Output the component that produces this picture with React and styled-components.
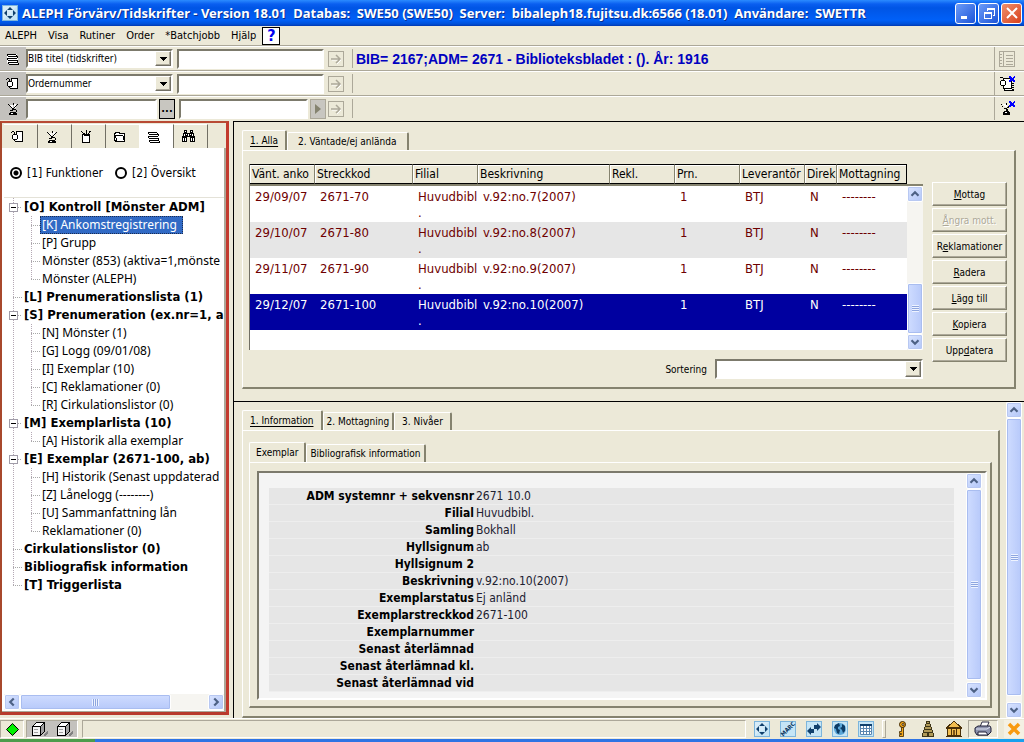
import React, {useState} from "react"
import styled, {createGlobalStyle, css} from "styled-components"

const GlobalStyle = createGlobalStyle`
	* {
		box-sizing: border-box;
	}
	body {
		margin: 0;
		background: #ece9d8;
		font-family: "DejaVu Sans Condensed", "DejaVu Sans", sans-serif;
		font-size: 12px;
		color: #000000;
	}
	button, select, input {
		font-family: inherit;
		color: inherit;
		margin: 0;
		padding: 0;
		border-radius: 0;
		outline: none;
	}
	svg {
		display: block;
		flex: none;
	}
`

/* ---------- icons ---------- */

const Pixel = ({size = 16, children}) => (
	<svg width={size} height={size} viewBox="0 0 16 16" shapeRendering="crispEdges" aria-hidden="true">
		{children}
	</svg>
)

const StackIcon = () => (
	<Pixel>
		<path d="M2 3h10v2h1v9H4v-2H2z" fill="#fff" />
		<path d="M2 3h9v1H2z M3 5h10v1H3z M2 7h10v1H2z M3 9h10v1H3z M3 11h10v1H3z M4 13h10v1H4z M2 4h1v1H2z M11 4h1v1h-1z M12 6h1v1h-1z M2 8h1v1H2z M12 10h1v1h-1z M3 12h1v1H3z M13 12h1v1h-1z" fill="#000" />
	</Pixel>
)

const OrderIcon = () => (
	<Pixel>
		<path d="M6 2h7v11H6z" fill="#fff" />
		<path d="M6 2h7v1H6z M12 3h1v9h-1z M5 12h8v1H5z M6 3h1v2H6z" fill="#000" />
		<path d="M3 5h4v1h1v4H7v1H3v-1H2V6h1z" fill="#000" />
		<path d="M3 6h4v4H3z" fill="#fff" />
		<path d="M1 3h1v1H1z M2 2h2v1H2z M4 3h1v2H4z M4 11h1v1H4z" fill="#000" />
	</Pixel>
)

const LampIcon = () => (
	<Pixel>
		<path d="M4 4h4v3H6z M9 3h2v4H9z" fill="#fff" />
		<path d="M3 3h1v1H3z M4 4h1v1H4z M5 5h1v1H5z M6 6h1v1H6z M8 2h1v2H8z M12 3h1v1h-1z M11 4h1v1h-1z M10 5h1v1h-1z M9 6h1v1H9z M7 7h2v2H7z M5 9h3v1H5z M9 8h2v1H9z M11 9h1v2h-1z M4 12h8v2H4z M5 11h6v1H5z" fill="#000" />
		<path d="M6 12h2v1H6z" fill="#fff" />
	</Pixel>
)

const BinIcon = () => (
	<Pixel>
		<path d="M4.500 5.500H11.500V13.500H4.500z" fill="#fff" stroke="#000" />
		<path d="M3 2h1v1h1v1H4V3H3z M5 4h2v2H5z M8 1h1v5H8z M11 2h2v1h-1v1h-1v1h-1V4h1z M6 5h5v2H6z" fill="#000" />
	</Pixel>
)

const FolderIcon = () => (
	<Pixel>
		<path d="M2.500 11.500V4.500H3.500V3.500H7.500V4.500H12.500V12.500H4.500z" fill="#fff" stroke="#000" />
		<path d="M2 6h9v1H2z M3 7h1v2H3z M4 9h1v3H4z M11 7h1v4h-1z" fill="#000" />
	</Pixel>
)

const BinocularsIcon = () => (
	<Pixel>
		<path d="M4 1h3v3h3V1h3v3h1v3h1v6h-5V8H7v5H2V7h1V4h1z" fill="#000" />
		<path d="M5 2h1v1H5z M11 2h1v1h-1z M4 5h1v2H4z M6 5h1v1H6z M10 5h1v1h-1z M12 5h1v2h-1z M8 5h1v2H8z M3 9h1v3H3z M5 9h1v3H5z M11 9h1v3h-1z M13 9h1v3h-1z" fill="#fff" />
	</Pixel>
)

const ListIcon = () => (
	<Pixel>
		<path d="M.5.5H15.500V15.500H.5z M4.500 1V15 M7 4.500H14 M7 7.500H14 M7 10.500H14 M7 13.500H14 M1 3.500H3 M1 6.500H3 M1 9.500H3 M1 12.500H3" fill="none" stroke="#aca899" />
	</Pixel>
)

const BlueCross = () => (
	<path d="M10 0h2v1h1v1h1V1h1V0h1v2h-1v2h1v2h-2V5h-2v1h-2V4h1V2h-1z" fill="#0000ff" />
)

const OrderCrossIcon = () => (
	<Pixel>
		<path d="M4.500 2.500H12.500V12.500H4.500z" fill="#fff" stroke="#000" />
		<path d="M2 4h4v1h1v4H6v1H2V9H1V5h1z M5 13h10v2H5z M1 1h3v1H1z M12 7h3v1h-2v1h2v1h-2v1h2v1h-3z" fill="#000" />
		<path d="M2 5h4v4H2z M6 13h7v1H6z" fill="#fff" />
		<BlueCross />
	</Pixel>
)

const LampCrossIcon = () => (
	<Pixel>
		<path d="M4 3h4v3H6z" fill="#fff" />
		<path d="M2 3h1v1H2z M3 5h1v1H3z M7 2h1v2H7z M9 5h2v1H9z M8 6h2v1H8z M5 7h3v1H5z M7 8h2v2H7z M4 11h7v3H4z M5 10h5v1H5z" fill="#000" />
		<path d="M6 11h2v1H6z" fill="#fff" />
		<BlueCross />
	</Pixel>
)

const GoIcon = ({size = 16}) => (
	<svg width={size} height={size} viewBox="0 0 14 14" aria-hidden="true">
		<path d="M3 8H12 M8 4L12 8L8 12" fill="none" stroke="#fff" />
		<path d="M2 7H11 M7 3L11 7L7 11" fill="none" stroke="#aca899" strokeWidth="1.500" />
	</svg>
)

const Chevron = ({dir}) => {
	const paths = {
		up: "M4 10L8 6L12 10",
		down: "M4 6L8 10L12 6",
		left: "M10 4L6 8L10 12",
		right: "M6 4L10 8L6 12",
	}
	return (
		<svg width="14" height="14" viewBox="0 0 16 16" aria-hidden="true">
			<path d={paths[dir]} fill="none" stroke="#4d6185" strokeWidth="2.500" />
		</svg>
	)
}

const DropArrow = () => (
	<svg width="7" height="4" viewBox="0 0 7 4" shapeRendering="crispEdges" aria-hidden="true">
		<path d="M0 0h7v1H6v1H5v1H4v1H3V3H2V2H1V1H0z" />
	</svg>
)

const AlephIcon = () => (
	<svg width="16" height="16" viewBox="0 0 16 16" aria-hidden="true">
		<rect x=".5" y=".5" width="15" height="15" fill="#c5e5f6" stroke="#7cb5dc" />
		<path d="M1 15L15 1H1z" fill="#d6ecf8" />
		<path d="M8 2l3 3H5z M8 14l3-3H5z M2 8l3-3v6z M14 8l-3-3v6z" fill="#10406c" />
		<circle cx="8" cy="8" r="2" fill="#d8eefa" />
	</svg>
)

const ToolIcon = ({kind}) => (
	<svg width="16" height="16" viewBox="0 0 16 16" aria-hidden="true">
		<rect x=".5" y=".5" width="15" height="15" fill="#c5e5f6" stroke="#7cb5dc" />
		{kind === "marc" && (
			<text x="8" y="10" fontSize="6" fontWeight="700" textAnchor="middle" transform="rotate(-45 8 8)" fill="#0c355e">MARC</text>
		)}
		{kind === "swap" && <path d="M1 10l4-4v2h3v4H5v2z M15 6l-4-4v2H8v4h3v2z" fill="#10406c" />}
		{kind === "globe" && (
			<>
				<circle cx="8" cy="8" r="6" fill="#5aa6d8" />
				<path d="M3 4l4-2 1 3-2 1v2l2 1-1 4-2-1-1-4-2-1z M10 3l3 2v5l-2 2-1-3-2-2 2-1z" fill="#0c3c66" />
			</>
		)}
		{kind === "grid" && (
			<>
				<path d="M2 3h12v11H2z" fill="#fff" />
				<path d="M2 3h12v2H2z" fill="#10406c" />
				<path d="M2.500 5V13.500H13.500V5 M5.500 5V14 M8.500 5V14 M11.500 5V14 M2 7.500H14 M2 10.500H14" stroke="#5a86b0" fill="none" />
			</>
		)}
	</svg>
)

const CubeIcon = () => (
	<svg width="18" height="16" viewBox="0 0 18 16" shapeRendering="crispEdges" aria-hidden="true">
		<path d="M12 14l5-5v3l-3 3z" fill="#808080" />
		<path d="M1.500 5.500L5.500 1.500H13.500L9.500 5.500z" fill="#fff" stroke="#000" />
		<path d="M9.500 5.500L13.500 1.500V10.500L9.500 14.500z" fill="#a0a0a0" stroke="#000" />
		<path d="M1.500 5.500H9.500V14.500H1.500z" fill="#f4f4f4" stroke="#000" />
		<path d="M3 8h4v1H3z M3 11h4v1H3z" fill="#a0a0a0" />
	</svg>
)

const KeyIcon = () => (
	<svg width="16" height="16" viewBox="0 0 16 16" aria-hidden="true">
		<circle cx="8.500" cy="3.500" r="3" fill="#f5a818" stroke="#3a2400" />
		<circle cx="9" cy="3.500" r="1" fill="#fff" stroke="#3a2400" />
		<path d="M7.500 6.500h2v9h-4v-2h2v-1h-2v-2h2z" fill="#f5a818" stroke="#3a2400" strokeWidth=".8" />
	</svg>
)

const TowerIcon = () => (
	<Pixel>
		<path d="M6 0h4v3h1v3h1v3h1v3h1v4H2v-4h1V9h1V6h1V3h1z" fill="#3c3418" />
		<path d="M7 1h2v1H7z M6 3h4v2H6z M5 6h6v2H5z M4 9h8v2H4z M3 12h4v3H3z M9 12h4v3H9z" fill="#b09a58" />
	</Pixel>
)

const TempleIcon = () => (
	<Pixel>
		<path d="M8 0l8 6v2h-1v7h1v1H0v-1h1V8H0V6z" fill="#4a3008" />
		<path d="M8 1l6 5H2z M2 8h3v6H2z M6 8h4v6H6z M11 8h3v6h-3z" fill="#f2be50" />
		<path d="M7 9h2v5H7z" fill="#7a5418" />
	</Pixel>
)

const PrinterIcon = () => (
	<svg width="18" height="16" viewBox="0 0 18 16" aria-hidden="true">
		<path d="M6 6l2-5h7l-2 5z" fill="#fff" stroke="#303048" />
		<path d="M1 7l3-2h12l1 2v4l-3 3H3l-2-3z" fill="#8c92ac" stroke="#202038" />
		<path d="M2 8h11l3-2" stroke="#e0e4f4" fill="none" />
		<path d="M4 11h8l2 3H4z" fill="#fff" stroke="#202038" />
	</svg>
)

/* ---------- shared parts ---------- */

const sunken = css`
	border: 2px solid;
	border-color: #7c7a6c #ffffff #ffffff #7c7a6c;
`

const raised = css`
	border: 1px solid;
	border-color: #ffffff #716f64 #716f64 #ffffff;
	box-shadow: inset -1px -1px 0 #aca899;
	background: #ece9d8;
`

const SelectWrap = styled.div`
	${sunken}
	display: grid;
	grid-template-columns: 1fr 16px;
	width: ${p => p.$width}px;
	height: ${p => p.$height || 19}px;
	background: #ffffff;
	select {
		grid-area: 1 / 1 / 2 / 3;
		appearance: none;
		border: none;
		background: transparent;
		font-size: 10px;
	}
`

const SelectArrow = styled.span`
	${raised}
	grid-area: 1 / 2;
	display: flex;
	align-items: center;
	justify-content: center;
	pointer-events: none;
`

const Select = ({id, label, options, ...rest}) => (
	<SelectWrap {...rest}>
		<select id={id} aria-label={label}>
			{options.map(o => <option key={o}>{o}</option>)}
		</select>
		<SelectArrow><DropArrow /></SelectArrow>
	</SelectWrap>
)

const TextInput = styled.input`
	${sunken}
	width: ${p => p.$width}px;
	height: 20px;
	background: #ffffff;
	font-size: 10px;
`

const Bar = styled.div`
	display: flex;
	flex-direction: ${p => (p.$horizontal ? "row" : "column")};
	align-self: stretch;
	flex: none;
	${p => (p.$horizontal ? "height: 16px;" : "width: 16px;")}
	background: #f6f5f1;
`

const BarButton = styled.button`
	display: flex;
	align-items: center;
	justify-content: center;
	flex: none;
	width: 16px;
	height: 16px;
	border: 1px solid #ffffff;
	border-radius: 2px;
	background: linear-gradient(135deg, #dbe5ff, #b2c6f8);
	box-shadow: inset 0 0 0 1px #b8c8f2;
`

const BarTrack = styled.div`
	display: flex;
	flex-direction: inherit;
	flex: 1;
`

const BarThumb = styled.div`
	display: flex;
	align-items: center;
	justify-content: center;
	flex: ${p => p.$size};
	border: 1px solid #ffffff;
	border-radius: 2px;
	box-shadow: inset 0 0 0 1px #a9bdf0;
	background: linear-gradient(${p => (p.$horizontal ? "180deg" : "90deg")}, #cfdcff, #b7c9fa);
	&::after {
		content: "";
		width: 7px;
		height: 7px;
		background: repeating-linear-gradient(${p => (p.$horizontal ? "90deg" : "180deg")}, #eef3ff 0 1px, #8ea6e0 1px 2px);
	}
`

const BarSpace = styled.div`
	flex: ${p => p.$size};
`

const ScrollBar = ({horizontal, before = 0, size = 1, after = 0}) => (
	<Bar $horizontal={horizontal}>
		<BarButton aria-label="Bakåt"><Chevron dir={horizontal ? "left" : "up"} /></BarButton>
		<BarTrack>
			<BarSpace $size={before} />
			<BarThumb $size={size} $horizontal={horizontal} />
			<BarSpace $size={after} />
		</BarTrack>
		<BarButton aria-label="Framåt"><Chevron dir={horizontal ? "right" : "down"} /></BarButton>
	</Bar>
)

const Tabs = styled.div`
	display: flex;
	align-items: flex-end;
	height: 20px;
`

const Tab = styled.button`
	height: ${p => (p.$active ? 20 : 18)}px;
	padding: 0 ${p => p.$pad || 6}px;
	border: solid;
	border-width: 1px 2px 0 1px;
	border-color: #ffffff #85836f #ffffff #ffffff;
	border-radius: 2px 2px 0 0;
	background: #ece9d8;
	font-size: 10px;
	line-height: 16px;
	white-space: nowrap;
	text-decoration: ${p => (p.$underline ? "underline" : "none")};
	text-underline-offset: 2px;
`

const TabPanel = styled.div`
	border: solid;
	border-width: 1px 2px 2px 1px;
	border-color: #ffffff #85836f #85836f #ffffff;
	display: flex;
	flex: 1;
	min-height: 0;
	padding: ${p => p.$padding};
`

/* ---------- title and menu ---------- */

const Window = styled.div`
	display: flex;
	flex-direction: column;
	min-height: 100vh;
`

const TitleBar = styled.header`
	display: flex;
	align-items: center;
	gap: 4px;
	height: 26px;
	padding: 0 2px;
	background: linear-gradient(#2b8bff 0, #0a5ff0 4px, #0055e5 8px, #0060f8 20px, #0050d8 24px, #0138b0 26px);
`

const TitleText = styled.h1`
	flex: 1;
	margin: 0;
	color: #ffffff;
	font-family: "Noto Sans", sans-serif;
	font-size: 13px;
	line-height: 16px;
	text-shadow: 1px 1px 0 #0a2f90;
	white-space: pre;
`

const TitleButton = styled.button`
	display: flex;
	align-items: center;
	justify-content: center;
	width: 21px;
	height: 21px;
	margin-left: -2px;
	border: 1px solid #ffffff;
	border-radius: 3px;
	background: ${p => (p.$close ? "linear-gradient(135deg, #f0906c, #d8401c)" : "linear-gradient(135deg, #6c9cf8, #1c54d8)")};
`

const MenuBar = styled.nav`
	display: flex;
	align-items: center;
	gap: 11px;
	height: 20px;
	padding: 0 5px;
	border-bottom: 1px solid #aca899;
	button {
		border: none;
		background: none;
		font-size: 11px;
		line-height: 16px;
	}
	.help {
		width: 18px;
		height: 18px;
		margin-left: -5px;
		border: 1px solid #000000;
		background: #ffffff;
		color: #0000f0;
		font-size: 16px;
		font-weight: 700;
	}
`

/* ---------- toolbars ---------- */

const ToolRow = styled.div`
	display: flex;
	align-items: center;
	height: 25px;
	border-top: 1px solid #ffffff;
	border-bottom: 1px solid ${p => (p.$last ? "#ece9d8" : "#aca899")};
`

const ToolHandle = styled.span`
	display: flex;
	align-items: center;
	justify-content: center;
	align-self: stretch;
	width: 26px;
	background: #c3c1bd;
`

const ToolFields = styled.div`
	display: flex;
	align-items: center;
	gap: 4px;
	width: 302px;
`

const Pair = styled.div`
	display: flex;
	gap: 2px;
	width: ${p => p.$width}px;
	input {
		flex: 1;
		min-width: 0;
	}
`

const SmallButton = styled.button`
	display: flex;
	align-items: center;
	justify-content: center;
	width: 16px;
	height: 20px;
	border: 1px solid ${p => (p.$dark ? "#000000" : "#aca899")};
	background: #c8c6c0;
	font-size: 11px;
	font-weight: 700;
	line-height: 12px;
`

const GoButton = styled.button`
	display: flex;
	align-items: center;
	justify-content: center;
	width: 16px;
	height: 16px;
	border: 1px solid #aca899;
	background: #ece9d8;
`

const RecordTitle = styled.div`
	display: flex;
	align-items: center;
	flex: 1;
	height: 19px;
	margin-left: 8px;
	padding-left: 3px;
	border-left: 1px solid #aca899;
	color: #0000c0;
	font-family: "Liberation Sans", Arial, sans-serif;
	font-size: 14px;
	font-weight: 700;
`

const ToolEnd = styled.div`
	display: flex;
	align-items: center;
	align-self: stretch;
	width: 30px;
	padding-left: 4px;
	border-left: 1px solid #aca899;
	button {
		border: none;
		background: none;
	}
`

/* ---------- left pane ---------- */

const Main = styled.main`
	display: grid;
	grid-template-columns: 229px minmax(0, 1fr);
	gap: 4px;
	flex: 1;
`

const SidePane = styled.aside`
	display: flex;
	flex-direction: column;
	min-width: 0;
	margin-bottom: 3px;
	border: solid;
	border-width: 2px 3px 3px 2px;
	border-color: #b84a34 #c23a2e #b83a2c #a8482c;
	background: #ffffff;
`

const SideTabs = styled.div`
	display: flex;
	height: 25px;
	background: #ece9d8;
	padding: 1px 0 0 2px;
`

const SideTab = styled.button`
	display: flex;
	align-items: center;
	padding-left: 6px;
	width: ${p => p.$width || 34}px;
	border: solid;
	border-width: 1px 1px 0 0;
	border-color: #ffffff ${p => (p.$flush ? "#ffffff" : "#716f64")};
	background: ${p => (p.$active ? "#ffffff" : "#ece9d8")};
`

const SideBody = styled.div`
	display: flex;
	flex-direction: column;
	flex: 1;
	min-width: 0;
	border-right: 2px solid #aca899;
	border-bottom: 1px solid #aca899;
	padding: 0 0 1px 2px;
`

const Modes = styled.div`
	display: flex;
	align-items: center;
	gap: 12px;
	height: 50px;
	padding-left: 6px;
	border-bottom: 1px solid #e4e2d8;
	label {
		display: flex;
		align-items: center;
		gap: 5px;
		white-space: nowrap;
	}
	input {
		appearance: none;
		width: 12px;
		height: 12px;
		border: 2px solid #000000;
		border-radius: 50%;
		background: #ffffff;
	}
	input:checked {
		background: radial-gradient(circle, #000000 0 2px, #ffffff 3px);
	}
`

const Tree = styled.ul`
	flex: 1;
	margin: 0;
	padding: 0 0 0 5px;
	list-style: none;
	overflow: hidden;
	ul {
		margin: 0 0 0 18px;
		padding: 0;
		list-style: none;
	}
`

/* dotted guide lines hang from the marker cell of every item */
const Item = styled.li`
	display: grid;
	grid-template-columns: 13px minmax(0, 1fr);
	background: repeating-linear-gradient(#b4a8b4 0 1px, transparent 1px 2px) no-repeat 4px 0 / 1px ${p => (p.$last ? "9px" : "100%")};
`

const Marker = styled.span`
	display: flex;
	align-items: center;
	height: 18px;
	padding-left: ${p => (p.$plain ? 4 : 0)}px;
	&::after {
		content: "";
		flex: 1;
		height: 1px;
		background: repeating-linear-gradient(90deg, #a8a8a8 0 1px, transparent 1px 2px);
	}
`

const Toggle = styled.button`
	display: flex;
	align-items: center;
	justify-content: center;
	width: 9px;
	height: 9px;
	border: 1px solid #a09ca8;
	background: #ffffff;
	&::after {
		content: "";
		width: 5px;
		height: 1px;
		background: #000000;
	}
`

const Label = styled.span`
	justify-self: start;
	height: 18px;
	padding: 0 2px;
	line-height: 18px;
	white-space: nowrap;
	${p => (p.$bold
		? "font-size: 13px; font-weight: 700;"
		: "font-size: 12px; font-family: \"Noto Sans\", sans-serif;")}
	${p => p.$selected && css`
		padding: 0 6px 0 2px;
		background: #316ac5;
		color: #ffffff;
		outline: 1px dotted #1b2c50;
		outline-offset: -1px;
	`}
`

const Branch = styled.div`
	grid-column: 1 / 3;
`

/* ---------- right side ---------- */

const WorkArea = styled.div`
	display: flex;
	flex-direction: column;
	min-width: 0;
	border-left: 1px solid #000000;
`

const UpperPane = styled.section`
	display: flex;
	flex-direction: column;
	height: 280px;
	border-top: 1px solid #000000;
	padding: 8px 8px 12px;
`

const ListColumn = styled.div`
	display: flex;
	flex-direction: column;
	flex: 1;
	min-width: 0;
`

const ListFrame = styled.div`
	display: flex;
	height: 187px;
`

const ListMain = styled.div`
	flex: 1;
	min-width: 0;
	border-left: 1px solid #716f64;
	background: linear-gradient(#ece9d8 20px, #ffffff 20px);
`

const ListScroll = styled.div`
	display: flex;
	margin-top: 20px;
	border-top: 2px solid #85836f;
`

const IssueTable = styled.table`
	width: 100%;
	table-layout: fixed;
	border-collapse: separate;
	border-spacing: 0;
	th, td {
		padding: 0;
		white-space: nowrap;
		text-align: left;
		font-weight: 400;
	}
	th {
		height: 20px;
		padding-left: 2px;
		border: solid;
		border-width: 1px 1px 1px 0;
		border-color: #000000 #85836f #000000;
		box-shadow: inset 1px 1px 0 #ffffff;
		font-size: 12px;
		line-height: 17px;
	}
	th:last-child {
		border-right-color: #000000;
	}
	td {
		height: 36px;
		padding: 3px 0 1px 5px;
		font-size: 13px;
		line-height: 16px;
		vertical-align: top;
	}
	tbody tr:first-child td {
		height: 38px;
		border-top: 2px solid #85836f;
	}
`

const IssueRow = styled.tr`
	color: ${p => (p.$selected ? "#ffffff" : "#6e0000")};
	background: ${p => (p.$selected ? "#0000a0" : p.$alt ? "#e6e6e6" : "#ffffff")};
`

const SortLine = styled.div`
	display: flex;
	align-items: center;
	justify-content: flex-end;
	gap: 8px;
	margin-top: 9px;
	font-size: 10px;
`

const Buttons = styled.div`
	display: flex;
	flex-direction: column;
	gap: 2px;
	width: 75px;
	margin: 18px 0 0 9px;
`

const ActionButton = styled.button`
	${raised}
	height: 24px;
	font-size: 10px;
	white-space: nowrap;
	border-right-color: #85836f;
	border-bottom-color: #85836f;
	&:disabled {
		color: #aca899;
		text-shadow: 1px 1px 0 #ffffff;
	}
`

const LowerPane = styled.section`
	display: flex;
	flex: 1;
	padding-right: 2px;
	border-top: 1px solid #000000;
`

const LowerContent = styled.div`
	display: flex;
	flex-direction: column;
	flex: 1;
	min-width: 0;
	padding: 8px 6px 0 8px;
`

const Nested = styled.div`
	display: flex;
	flex-direction: column;
	flex: 1;
	min-width: 0;
`

const Details = styled.div`
	${sunken}
	display: flex;
	flex: 1;
	padding-right: 3px;
	background: #f4f4f4;
`

const DetailBody = styled.div`
	flex: 1;
	padding: 15px 12px 5px 10px;
`

const DetailTable = styled.table`
	width: 100%;
	border-collapse: separate;
	border-spacing: 0;
	th, td {
		height: 17px;
		padding: 0 1px;
		border-bottom: 1px solid #eeeeee;
		background: #e6e6e6;
		font-size: 12px;
		line-height: 16px;
	}
	th {
		width: 206px;
		text-align: right;
		white-space: nowrap;
	}
	td {
		color: #202030;
	}
`

/* ---------- status bar ---------- */

const StatusBar = styled.footer`
	display: flex;
	align-items: center;
	height: 21px;
	border-top: 1px solid #ffffff;
`

const StatusCell = styled.div`
	display: flex;
	align-items: center;
	justify-content: space-around;
	width: ${p => p.$width}px;
	height: 18px;
	margin-right: 2px;
	border: 1px solid;
	border-color: #aca899 #ffffff #ffffff #aca899;
	background: ${p => p.$fill || "transparent"};
`

const StatusText = styled.div`
	flex: 1;
	height: 18px;
	margin: 0 8px 0 2px;
	border: 1px solid;
	border-color: #aca899 #ffffff #ffffff #aca899;
`

const StatusTools = styled.div`
	display: flex;
	align-items: center;
	gap: 10px;
	button {
		border: none;
		background: none;
	}
`

const Divider = styled.span`
	width: 4px;
	height: 18px;
	margin: 0 -2px;
	border: 1px solid;
	border-color: #ffffff #aca899 #aca899 #ffffff;
`

const Pressed = styled.button`
	display: flex;
	align-items: center;
	justify-content: center;
	width: 30px;
	height: 18px;
	margin: 0 6px;
	border: 1px solid;
	border-color: #aca899 #ffffff #ffffff #aca899;
	background: none;
`

const CloseMark = styled.button`
	width: 20px;
	height: 18px;
	padding: 0 2px;
	border: none;
	background: #f4f1e4;
`

const TaskEdge = styled.div`
	display: grid;
	grid-template-columns: 95px 1fr 74px;
	height: 3px;
	span:nth-child(1) { background: #4c9c4c; }
	span:nth-child(2) { background: #2e74e4; }
	span:nth-child(3) { background: #18a0ee; }
`

/* ---------- data ---------- */

const tree = [
	{text: "[O] Kontroll [Mönster ADM]", open: true, items: ["[K] Ankomstregistrering", "[P] Grupp", "Mönster (853) (aktiva=1,mönste", "Mönster (ALEPH)"]},
	{text: "[L] Prenumerationslista (1)"},
	{text: "[S] Prenumeration (ex.nr=1, al", open: true, items: ["[N] Mönster (1)", "[G] Logg (09/01/08)", "[I] Exemplar (10)", "[C] Reklamationer (0)", "[R] Cirkulationslistor (0)"]},
	{text: "[M] Exemplarlista (10)", open: true, items: ["[A] Historik alla exemplar"]},
	{text: "[E] Exemplar (2671-100, ab)", open: true, items: ["[H] Historik (Senast uppdaterad", "[Z] Lånelogg (--------)", "[U] Sammanfattning lån", "Reklamationer (0)"]},
	{text: "Cirkulationslistor (0)"},
	{text: "Bibliografisk information"},
	{text: "[T] Triggerlista"},
]

const columns = [
	["Vänt. anko", 65], ["Streckkod", 98], ["Filial", 65], ["Beskrivning", null], ["Rekl.", 65],
	["Prn.", 65], ["Leverantör", 65], ["Direk", 32], ["Mottagning", 70],
]

const issues = [
	["29/09/07", "2671-70", "v.92:no.7(2007)"],
	["29/10/07", "2671-80", "v.92:no.8(2007)"],
	["29/11/07", "2671-90", "v.92:no.9(2007)"],
	["29/12/07", "2671-100", "v.92:no.10(2007)"],
]

const actions = [
	["", "M", "ottag"], ["", "Å", "ngra mott.", true], ["R", "e", "klamationer"], ["", "R", "adera"],
	["", "L", "ägg till"], ["", "K", "opiera"], ["Upp", "d", "atera"],
]

const details = [
	["ADM systemnr + sekvensnr", "2671 10.0"],
	["Filial", "Huvudbibl."],
	["Samling", "Bokhall"],
	["Hyllsignum", "ab"],
	["Hyllsignum 2", ""],
	["Beskrivning", "v.92:no.10(2007)"],
	["Exemplarstatus", "Ej anländ"],
	["Exemplarstreckkod", "2671-100"],
	["Exemplarnummer", ""],
	["Senast återlämnad", ""],
	["Senast återlämnad kl.", ""],
	["Senast återlämnad vid", ""],
]

export default function App() {
	const [mode, setMode] = useState("1")
	const sideIcons = [OrderIcon, LampIcon, BinIcon, FolderIcon, StackIcon, BinocularsIcon]

	return (
		<Window>
			<GlobalStyle />
			<TitleBar>
				<AlephIcon />
				<TitleText>{"ALEPH Förvärv/Tidskrifter - Version 18.01  Databas:  SWE50 (SWE50)  Server:  bibaleph18.fujitsu.dk:6566 (18.01)  Användare:  SWETTR"}</TitleText>
				<TitleButton aria-label="Minimera">
					<Pixel><path d="M3 11h6v3H3z" fill="#fff" /></Pixel>
				</TitleButton>
				<TitleButton aria-label="Återställ">
					<Pixel><path d="M3 7h8v7H3z M4 9v4h6V9z M6 3h8v8h-2v-1h1V5H7v1H6z" fill="#fff" fillRule="evenodd" /></Pixel>
				</TitleButton>
				<TitleButton $close aria-label="Stäng">
					<svg width="16" height="16" viewBox="0 0 16 16"><path d="M3 3L13 13M13 3L3 13" stroke="#fff" strokeWidth="2" /></svg>
				</TitleButton>
			</TitleBar>
			<MenuBar>
				{["ALEPH", "Visa", "Rutiner", "Order", "*Batchjobb", "Hjälp"].map(m => <button key={m}>{m}</button>)}
				<button className="help">?</button>
			</MenuBar>

			<ToolRow>
				<ToolHandle><StackIcon /></ToolHandle>
				<ToolFields>
					<Select $width={147} label="BIB sökfält" options={["BIB titel (tidskrifter)"]} />
					<TextInput $width={147} aria-label="BIB sökterm" />
				</ToolFields>
				<GoButton aria-label="Sök BIB"><GoIcon size={14} /></GoButton>
				<RecordTitle>BIB= 2167;ADM= 2671 - Biblioteksbladet : (). År: 1916</RecordTitle>
				<ToolEnd><button aria-label="Lista"><ListIcon /></button></ToolEnd>
			</ToolRow>
			<ToolRow>
				<ToolHandle><OrderIcon /></ToolHandle>
				<ToolFields>
					<Select $width={147} label="Order sökfält" options={["Ordernummer"]} />
					<TextInput $width={147} aria-label="Order sökterm" />
				</ToolFields>
				<GoButton aria-label="Sök order"><GoIcon size={14} /></GoButton>
				<RecordTitle />
				<ToolEnd><button aria-label="Stäng order"><OrderCrossIcon /></button></ToolEnd>
			</ToolRow>
			<ToolRow $last>
				<ToolHandle><LampIcon /></ToolHandle>
				<ToolFields>
					<Pair $width={149}>
						<TextInput aria-label="Leverantör" />
						<SmallButton $dark>...</SmallButton>
					</Pair>
					<Pair $width={147}>
						<TextInput aria-label="Fakturanummer" />
						<SmallButton aria-label="Nästa">
							<svg width="6" height="10" viewBox="0 0 6 10"><path d="M0 0L6 5L0 10z" fill="#85836f" /></svg>
						</SmallButton>
					</Pair>
				</ToolFields>
				<GoButton aria-label="Sök faktura"><GoIcon size={14} /></GoButton>
				<RecordTitle />
				<ToolEnd><button aria-label="Stäng faktura"><LampCrossIcon /></button></ToolEnd>
			</ToolRow>

			<Main>
				<SidePane>
					<SideTabs>
						{sideIcons.map((Icon, i) => (
							<SideTab key={i} $active={i === 4} $flush={i === 3} aria-label={`Flik ${i + 1}`}><Icon /></SideTab>
						))}
					</SideTabs>
					<SideBody>
						<Modes>
							{[["1", "[1] Funktioner"], ["2", "[2] Översikt"]].map(([v, text]) => (
								<label key={v}>
									<input type="radio" name="mode" checked={mode === v} onChange={() => setMode(v)} />
									{text}
								</label>
							))}
						</Modes>
						<Tree>
							{tree.map((node, i) => (
								<Item key={node.text} $last={i === tree.length - 1}>
									<Marker $plain={!node.open}>{node.open && <Toggle aria-label="Fäll ihop" />}</Marker>
									<Label $bold>{node.text}</Label>
									{node.items && (
										<Branch>
											<ul>
												{node.items.map((text, j) => (
													<Item key={text} $last={j === node.items.length - 1}>
														<Marker $plain />
														<Label $selected={i === 0 && j === 0}>{text}</Label>
													</Item>
												))}
											</ul>
										</Branch>
									)}
								</Item>
							))}
						</Tree>
						<ScrollBar horizontal size={80} after={20} />
					</SideBody>
				</SidePane>

				<WorkArea>
					<UpperPane>
						<Tabs>
							<Tab $active $underline $pad={7}>1. Alla</Tab>
							<Tab $pad={10}>2. Väntade/ej anlända</Tab>
						</Tabs>
						<TabPanel $padding="13px 7px 8px 6px">
							<ListColumn>
								<ListFrame>
									<ListMain>
										<IssueTable>
											<colgroup>
												{columns.map(([name, w]) => <col key={name} width={w || undefined} />)}
											</colgroup>
											<thead>
												<tr>{columns.map(([name]) => <th key={name} scope="col">{name}</th>)}</tr>
											</thead>
											<tbody>
												{issues.map(([date, code, desc], i) => (
													<IssueRow key={date} $alt={i % 2 === 1} $selected={i === 3}>
														<td>{date}</td>
														<td>{code}</td>
														<td>Huvudbibl<br />.</td>
														<td>{desc}</td>
														<td />
														<td>1</td>
														<td>BTJ</td>
														<td>N</td>
														<td>--------</td>
													</IssueRow>
												))}
											</tbody>
										</IssueTable>
									</ListMain>
									<ListScroll><ScrollBar before={62} size={38} /></ListScroll>
								</ListFrame>
								<SortLine>
									<label htmlFor="sort">Sortering</label>
									<Select id="sort" $width={208} $height={20} options={[""]} />
								</SortLine>
							</ListColumn>
							<Buttons>
								{actions.map(([pre, key, post, off]) => (
									<ActionButton key={key + post} disabled={off}>{pre}<u>{key}</u>{post}</ActionButton>
								))}
							</Buttons>
						</TabPanel>
					</UpperPane>

					<LowerPane>
						<LowerContent>
							<Tabs>
								<Tab $active $underline $pad={7}>1. Information</Tab>
								<Tab $pad={3}>2. Mottagning</Tab>
								<Tab $pad={7}>3. Nivåer</Tab>
							</Tabs>
							<TabPanel $padding="11px 6px 8px 6px">
								<Nested>
									<Tabs>
										<Tab $active>Exemplar</Tab>
										<Tab $pad={3}>Bibliografisk information</Tab>
									</Tabs>
									<TabPanel $padding="8px 3px 6px 7px">
										<Details>
											<DetailBody>
												<DetailTable>
													<tbody>
														{details.map(([name, value]) => (
															<tr key={name}>
																<th scope="row">{name}</th>
																<td>{value}</td>
															</tr>
														))}
													</tbody>
												</DetailTable>
											</DetailBody>
											<ScrollBar size={99} after={1} />
										</Details>
									</TabPanel>
								</Nested>
							</TabPanel>
						</LowerContent>
						<ScrollBar size={98} after={2} />
					</LowerPane>
				</WorkArea>
			</Main>

			<StatusBar>
				<StatusCell $width={24}>
					<svg width="13" height="13" viewBox="0 0 13 13"><path d="M6.500.5L12.500 6.500L6.500 12.500L.5 6.500z" fill="#00f000" stroke="#000" /></svg>
				</StatusCell>
				<StatusCell $width={52} $fill="#c3c1bd"><CubeIcon /><CubeIcon /></StatusCell>
				<StatusText />
				<StatusTools>
					<AlephIcon />
					<ToolIcon kind="marc" />
					<ToolIcon kind="swap" />
					<ToolIcon kind="globe" />
					<ToolIcon kind="grid" />
					<Divider />
					<KeyIcon />
					<TowerIcon />
					<TempleIcon />
				</StatusTools>
				<Pressed aria-label="Skriv ut"><PrinterIcon /></Pressed>
				<CloseMark aria-label="Avsluta">
					<svg width="16" height="16" viewBox="0 0 16 16"><path d="M3 3L13 13M13 3L3 13" stroke="#f89a10" strokeWidth="3.500" /></svg>
				</CloseMark>
			</StatusBar>
			<TaskEdge><span /><span /><span /></TaskEdge>
		</Window>
	)
}
